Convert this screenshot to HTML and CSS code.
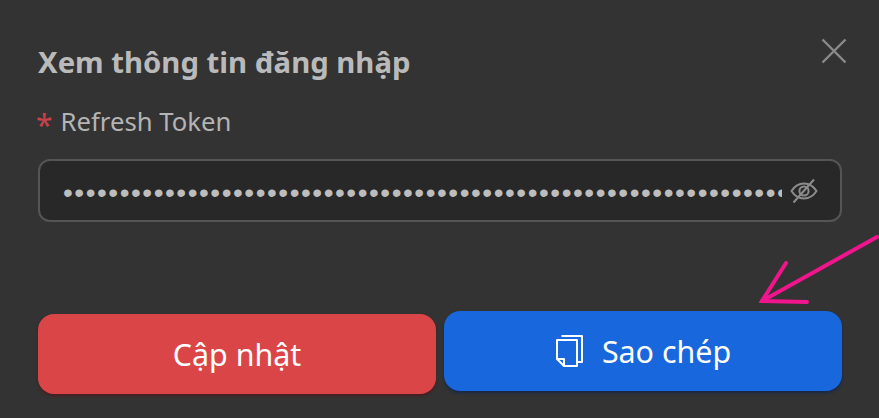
FILE: index.html
```html
<!DOCTYPE html>
<html lang="vi">
<head>
    <meta charset="UTF-8">
    <meta name="viewport" content="width=device-width, initial-scale=1.0">
    <title>Xem thông tin đăng nhập</title>
    <link rel="stylesheet" href="styles.css">
</head>
<body>
    <div class="modal">
        <h1 class="title">Xem thông tin đăng nhập</h1>

        <!-- Nút đóng -->
        <svg class="close" width="26" height="26" viewBox="0 0 26 26" fill="none" stroke="#8a8a8a" stroke-width="2.4">
            <path d="M1.5 1.5 L24.5 24.5 M24.5 1.5 L1.5 24.5"/>
        </svg>

        <label class="label" for="token"><span class="required">*</span>Refresh Token</label>

        <div class="field">
            <input class="token" id="token" type="password" value="aaaaaaaaaaaaaaaaaaaaaaaaaaaaaaaaaaaaaaaaaaaaaaaaaaaaaaaaaaaaaaaaaaaaaaaaaaaaaaaa" readonly>
            <svg class="eye" width="28" height="26" viewBox="0 0 28 26" fill="none" stroke="#8c8c8c" stroke-width="2">
                <path d="M1.5 13 C5 7.5 9 5.5 14 5.5 C19 5.5 23 7.5 26.5 13 C23 18.5 19 20.5 14 20.5 C9 20.5 5 18.5 1.5 13 Z"/>
                <circle cx="14" cy="13" r="4.6"/>
                <path d="M24 1.5 L3.5 24.5"/>
            </svg>
        </div>

        <div class="buttons">
            <button class="btn btn-update">Cập nhật</button>
            <button class="btn btn-copy">
                <svg width="28" height="34" viewBox="0 0 28 34" fill="none" stroke="#fff" stroke-width="2" stroke-linejoin="round">
                    <path d="M2 6 H22 V32 H9 L2 25 Z"/>
                    <path d="M2 25 H9 V32"/>
                    <path d="M6.5 2 H27 V28 H23"/>
                </svg>
                Sao chép
            </button>
        </div>
    </div>

    <!-- Mũi tên chú thích -->
    <svg class="arrow" width="122" height="70" viewBox="0 0 122 70" fill="none" stroke="#f0158c" stroke-width="4" stroke-linecap="round">
        <path d="M118 2 L3 66"/>
        <path d="M27 28 L3 66 L48 67"/>
    </svg>
</body>
</html>
```

FILE: styles.css
```css
* {
    box-sizing: border-box;
}
body {
    margin: 0;
    height: 418px;
    overflow: hidden;
    position: relative;
    background: #333;
    font-family: "Noto Sans", sans-serif;
}
.modal {
    padding: 42px 37px 0 38px;
}
.title {
    margin: 0;
    font-size: 29.3px;
    line-height: 40px;
    font-weight: 700;
    color: #bababa;
}
.close {
    position: absolute;
    left: 821px;
    top: 38px;
}
.label {
    display: block;
    margin-top: 21px;
    font-size: 25.7px;
    line-height: 38px;
    color: #b4b4b4;
}
.required {
    color: #c9424a;
    font-size: 30px;
    line-height: 0;
    vertical-align: -5px;
    margin: 0 8px 0 -2px;
}
.field {
    display: flex;
    align-items: center;
    height: 63px;
    margin-top: 18px;
    padding: 0 22px 0 23px;
    background: #282828;
    border: 2px solid #555;
    border-radius: 12px;
}
.token {
    flex: 1;
    min-width: 0;
    padding: 5px 0 0;
    border: none;
    outline: none;
    background: transparent;
    color: #bdbdbd;
    font-family: "Liberation Sans", sans-serif;
    font-size: 28px;
    letter-spacing: 1.53px;
}
.eye {
    margin-left: 8px;
}
.buttons {
    display: flex;
    gap: 8px;
    margin-top: 89px;
}
.btn {
    flex: 1;
    height: 80px;
    display: flex;
    align-items: center;
    justify-content: center;
    gap: 19px;
    border: none;
    border-radius: 16px;
    color: #fff;
    font-family: "Noto Sans", sans-serif;
    font-size: 30.4px;
}
.btn-update {
    margin-top: 3px;
    background: #da4648;
    box-shadow: 0 2px 3px #4a1e20;
}
.btn-copy {
    background: #1967dc;
    box-shadow: 0 2px 3px #14284a;
}
.arrow {
    position: absolute;
    left: 759px;
    top: 235px;
}
```
